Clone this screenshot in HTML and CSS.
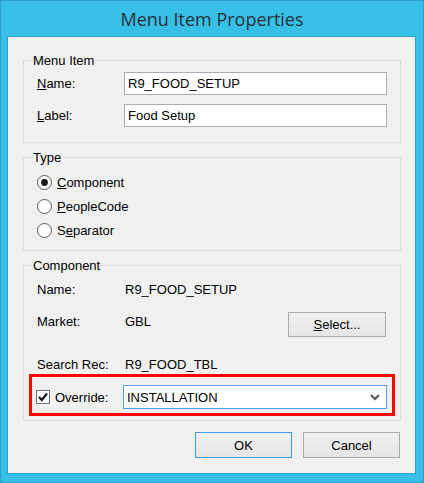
FILE: index.html
```html
<!DOCTYPE html>
<html>
<head>
    <title>Menu Item Properties</title>
    <link rel="stylesheet" href="styles.css">
</head>
<body>
    <div class="window">
        <div class="titlebar">Menu Item Properties</div>

        <div class="client">
            <fieldset class="group group-item">
                <legend>Menu Item</legend>
                <div class="field-row">
                    <label class="field-label"><u>N</u>ame:</label>
                    <input class="text-input" type="text" value="R9_FOOD_SETUP">
                </div>
                <div class="field-row">
                    <label class="field-label"><u>L</u>abel:</label>
                    <input class="text-input" type="text" value="Food Setup">
                </div>
            </fieldset>

            <fieldset class="group group-type">
                <legend>Type</legend>
                <div class="radio-row">
                    <svg class="radio" width="15" height="15" viewBox="0 0 15 15">
                        <circle cx="7.5" cy="7.5" r="7" fill="#fdfdfd" stroke="#5a5a5a"/>
                        <circle cx="7.5" cy="7.5" r="3.4" fill="#1a1a1a"/>
                    </svg>
                    <span><u>C</u>omponent</span>
                </div>
                <div class="radio-row">
                    <svg class="radio" width="15" height="15" viewBox="0 0 15 15">
                        <circle cx="7.5" cy="7.5" r="7" fill="#fdfdfd" stroke="#5a5a5a"/>
                    </svg>
                    <span><u>P</u>eopleCode</span>
                </div>
                <div class="radio-row">
                    <svg class="radio" width="15" height="15" viewBox="0 0 15 15">
                        <circle cx="7.5" cy="7.5" r="7" fill="#fdfdfd" stroke="#5a5a5a"/>
                    </svg>
                    <span>S<u>e</u>parator</span>
                </div>
            </fieldset>

            <fieldset class="group group-component">
                <legend>Component</legend>
                <div class="info-row row-name">
                    <span class="field-label">Name:</span>
                    <span>R9_FOOD_SETUP</span>
                </div>
                <div class="info-row row-market">
                    <span class="field-label">Market:</span>
                    <span class="market-value">GBL</span>
                    <button class="btn btn-select"><u>S</u>elect...</button>
                </div>
                <div class="info-row row-search">
                    <span class="field-label">Search Rec:</span>
                    <span>R9_FOOD_TBL</span>
                </div>
                <div class="override-box">
                    <svg class="checkbox" width="14" height="14" viewBox="0 0 14 14">
                        <rect x="0.5" y="0.5" width="13" height="13" fill="#fdfdfd" stroke="#707070"/>
                        <path d="M3 7 L5.8 10 L11 3.5" fill="none" stroke="#1a1a1a" stroke-width="2.2"/>
                    </svg>
                    <span class="override-label">Override:</span>
                    <div class="dropdown">
                        <span>INSTALLATION</span>
                        <svg width="10" height="7" viewBox="0 0 10 7">
                            <path d="M1 1 L5 5 L9 1" fill="none" stroke="#555" stroke-width="2"/>
                        </svg>
                    </div>
                </div>
            </fieldset>

            <div class="actions">
                <button class="btn btn-default">OK</button>
                <button class="btn">Cancel</button>
            </div>
        </div>
    </div>
</body>
</html>
```

FILE: styles.css
```css
body {
    margin: 0;
    font-family: "Liberation Sans", Arial, sans-serif;
    font-size: 13px;
    color: #000;
}

.window {
    width: 424px;
    height: 483px;
    box-sizing: border-box;
    background: #38bfe7;
    border: 1px solid #2a9fca;
}

.titlebar {
    height: 35px;
    line-height: 36px;
    text-align: center;
    font-family: "Open Sans", "Noto Sans", sans-serif;
    font-size: 18px;
    color: #24323a;
}

.client {
    margin: 0 6px;
    width: 407px;
    height: 436px;
    background: #f0f0f0;
    border: 1px solid #2ba2cc;
    display: flex;
    flex-direction: column;
}

.group {
    margin: 7px 14px 0 15px;
    padding: 0;
    border: 1px solid #dcdcdc;
    width: 378px;
    box-sizing: border-box;
    min-width: 0;
}

.group legend {
    margin-left: 7px;
    padding: 0 2px;
    line-height: 15px;
}

.group-item {
    margin-top: 16px;
    padding: 4px 0 15px;
}

.field-row {
    display: flex;
    align-items: center;
}

.field-row + .field-row {
    margin-top: 9px;
}

.field-label {
    padding-left: 13px;
    width: 87px;
    flex-shrink: 0;
}

.text-input {
    width: 263px;
    height: 23px;
    box-sizing: border-box;
    border: 1px solid #abadb3;
    padding: 0 3px;
    font: inherit;
    color: #000;
    background: #fff;
}

.group-type {
    padding: 5px 0 8px;
}

.radio-row {
    height: 24px;
    display: flex;
    align-items: center;
    padding-left: 13px;
}

.radio {
    margin-right: 5px;
}

.group-component {
    padding: 6px 0 4px;
}

.info-row {
    display: flex;
    line-height: 15px;
}

.row-name {
    height: 20px;
    align-items: center;
}

.row-market {
    margin-top: 13px;
    height: 25px;
}

.row-market .field-label,
.market-value {
    margin-top: 2px;
}

.market-value {
    flex: 1;
    padding-left: 1px;
}

.info-row .field-label + span {
    padding-left: 1px;
}

.row-search {
    margin-top: 20px;
}

.btn {
    font: inherit;
    color: #000;
    height: 25px;
    width: 98px;
    box-sizing: border-box;
    border: 1px solid #acacac;
    background: linear-gradient(#f0f0f0, #e5e5e5);
    padding: 0;
}

.btn-select {
    margin-right: 14px;
}

.override-box {
    margin: 2px 0 0 5px;
    width: 366px;
    height: 42px;
    box-sizing: border-box;
    border: 3px solid #ff0000;
    padding: 8px 5px 4px 4px;
    display: flex;
    align-items: center;
}

.checkbox {
    flex-shrink: 0;
}

.override-label {
    margin-left: 5px;
    width: 68px;
}

.dropdown {
    width: 264px;
    height: 24px;
    box-sizing: border-box;
    border: 1px solid #569de5;
    background: #fff;
    display: flex;
    align-items: center;
    justify-content: space-between;
    padding: 0 6px 0 3px;
}

.actions {
    display: flex;
    justify-content: flex-end;
    gap: 11px;
    margin: 11px 15px 0 0;
}

.actions .btn {
    width: 97px;
    height: 26px;
}

.btn-default {
    border-color: #3c9cf0;
}
```
